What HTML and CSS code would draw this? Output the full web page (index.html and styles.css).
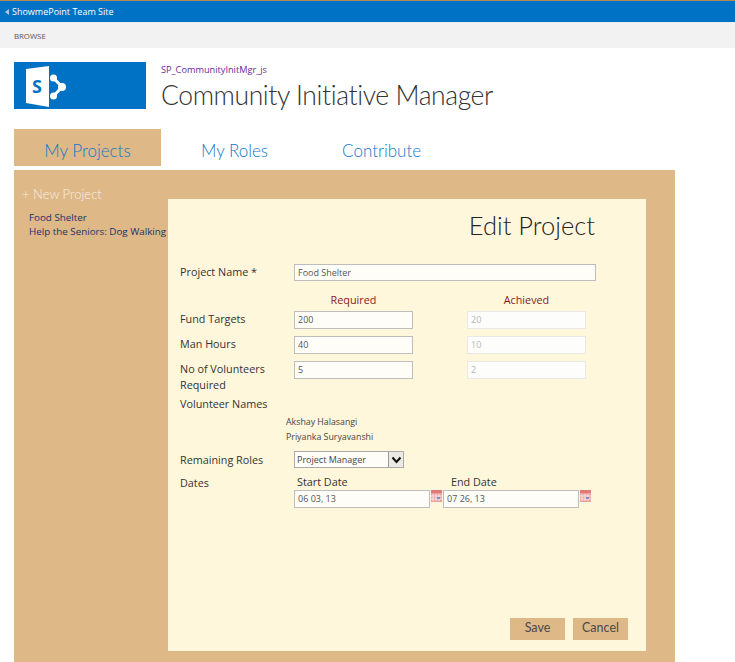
FILE: index.html
```html
<!DOCTYPE html>
<html lang="en">
<head>
<meta charset="utf-8">
<title>Community Initiative Manager</title>
<link rel="stylesheet" href="styles.css">
</head>
<body>
<header class="suitebar"><span class="back-arrow"></span><span>ShowmePoint Team Site</span></header>
<div class="ribbon">BROWSE</div>
<div class="site-head">
  <div class="logo">
    <svg width="48" height="42" viewBox="0 0 48 42">
      <path fill="#fff" d="M0 3 L23 0 V41 L0 37 Z"/>
      <text x="6" y="27" class="logo-s">S</text>
      <circle cx="27.500" cy="12" r="3.500" fill="#fff"/>
      <circle cx="27.500" cy="30" r="3.500" fill="#fff"/>
      <circle cx="36" cy="21" r="4" fill="#fff"/>
      <path fill="none" stroke="#fff" stroke-width="3" d="M27.500 12 L36 21 L27.500 30"/>
    </svg>
  </div>
  <div class="site-title">
    <a class="breadcrumb">SP_CommunityInitMgr_js</a>
    <h1>Community Initiative Manager</h1>
  </div>
</div>
<nav class="tabs">
  <a class="tab tab-active">My Projects</a>
  <a class="tab tab-roles">My Roles</a>
  <a class="tab tab-contribute">Contribute</a>
</nav>
<main class="panel">
  <aside class="sidebar">
    <div class="new-project">+ New Project</div>
    <ul class="projects">
      <li>Food Shelter</li>
      <li>Help the Seniors: Dog Walking</li>
    </ul>
  </aside>
  <section class="editor">
    <h2>Edit Project</h2>
    <div class="form">
      <label class="row-name">Project Name *</label>
      <div class="field wide">Food Shelter</div>

      <span class="heads"></span>
      <div class="head heads">Required</div>
      <div class="head heads">Achieved</div>

      <label>Fund Targets</label>
      <div class="field">200</div>
      <div class="field off">20</div>

      <label>Man Hours</label>
      <div class="field">40</div>
      <div class="field off">10</div>

      <label>No of Volunteers Required</label>
      <div class="field">5</div>
      <div class="field off">2</div>
    </div>
    <div class="volunteers">
      <div class="vol-label">Volunteer Names</div>
      <div class="vol-name">Akshay Halasangi</div>
      <div class="vol-name">Priyanka Suryavanshi</div>
    </div>
    <div class="roles">
      <label>Remaining Roles</label>
      <div class="select"><span class="select-text">Project Manager</span><span class="select-btn"><svg width="11" height="8" viewBox="0 0 11 8"><path d="M1.500 1.500 L5.500 6 L9.500 1.500" fill="none" stroke="#111" stroke-width="2"/></svg></span></div>
    </div>
    <div class="dates">
      <label>Dates</label>
      <div class="date">
        <div class="date-label">Start Date</div>
        <div class="date-line">
          <div class="field date-field">06 03, 13</div>
          <svg class="cal" width="11" height="12" viewBox="0 0 11 12"><rect width="11" height="12" fill="#ee9f9f"/><rect y="0" width="11" height="3" fill="#e07a76"/><path d="M2 4v7M5 4v7M8 4v7M0 6h11M0 9h11" stroke="#fbe3e3"/><rect x="6" y="7" width="3" height="2" fill="#6f93dc"/></svg>
        </div>
      </div>
      <div class="date">
        <div class="date-label">End Date</div>
        <div class="date-line">
          <div class="field date-field">07 26, 13</div>
          <svg class="cal" width="11" height="12" viewBox="0 0 11 12"><rect width="11" height="12" fill="#ee9f9f"/><rect y="0" width="11" height="3" fill="#e07a76"/><path d="M2 4v7M5 4v7M8 4v7M0 6h11M0 9h11" stroke="#fbe3e3"/><rect x="6" y="7" width="3" height="2" fill="#6f93dc"/></svg>
        </div>
      </div>
    </div>
    <div class="actions">
      <button class="btn">Save</button>
      <button class="btn">Cancel</button>
    </div>
  </section>
</main>
</body>
</html>
```
FILE: styles.css
```css
* { box-sizing: border-box; }
html, body { margin: 0; padding: 0; height: 662px; overflow: hidden; background: #fff; }
body { font-family: "Open Sans", "Noto Sans", sans-serif; color: #333; }

.suitebar { height: 23px; background: #0072c6; border-top: 1px solid #b08a4c; color: #fff; font-size: 9px; line-height: 21px; display: flex; align-items: center; padding-left: 5px; border-bottom: 1px solid #e6eef5; }
.back-arrow { width: 0; height: 0; border: 3.500px solid transparent; border-right: 4px solid #a9c6e2; border-left: 0; margin-right: 3px; }
.ribbon { height: 25px; background: #f2f2f2; color: #555; font-size: 7.800px; line-height: 27px; padding-left: 14px; }

.site-head { display: flex; padding: 14px 0 0 14px; height: 81px; }
.logo { width: 132px; height: 47px; background: #0072c6; padding: 4px 0 0 12px; }
.logo svg { display: block; }
.logo-s { font-family: "Open Sans", sans-serif; font-weight: 700; font-size: 18px; fill: #0072c6; }
.site-title { margin-left: 15px; }
.breadcrumb { display: block; color: #6a2a9c; font-size: 9.200px; line-height: 14px; margin-top: 1px; }
h1 { margin: 0; font-family: Lato, "Open Sans", sans-serif; font-weight: 300; font-size: 26.500px; letter-spacing: -0.400px; line-height: 36px; color: #333; white-space: nowrap; }

.tabs { display: flex; height: 37px; margin-left: 14px; font-family: Lato, "Open Sans", sans-serif; font-size: 17px; font-weight: 300; color: #0f78c8; }
.tab { line-height: 44px; }
.tab-active { width: 147px; background: #deb887; text-align: center; }
.tab-roles { margin-left: 40px; }
.tab-contribute { margin-left: 74px; }

.panel { display: flex; width: 661px; height: 492px; margin: 4px 0 0 14px; background: #deb887; position: relative; }
.sidebar { width: 154px; flex: none; padding-top: 15px; }
.new-project { color: #f8f0e0; font-family: Lato, "Open Sans", sans-serif; font-size: 13px; font-weight: 300; line-height: 18px; padding-left: 8px; }
.projects { list-style: none; margin: 8px 0 0; padding: 0 0 0 15px; color: #1a3366; font-size: 9.800px; line-height: 14px; white-space: nowrap; }

.editor { width: 478px; height: 452px; margin-top: 29px; background: #fff7dc; padding: 0 12px 0 12px; position: relative; display: flex; flex-direction: column; font-size: 10.800px; color: #333; }
h2 { margin: 9px 39px 0 0; text-align: right; font-family: Lato, "Open Sans", sans-serif; font-weight: 300; font-size: 25.500px; line-height: 34px; color: #222; }

.form { display: grid; grid-template-columns: 114px 173px 119px; margin-top: 22px; align-items: start; }
label { line-height: 16px; }
.field { height: 18px; width: 119px; background: #fffdf8; border: 1px solid #bdbdbd; color: #555; font-size: 9px; line-height: 16px; padding-left: 3px; margin-bottom: 7px; }
.field.wide { width: 302px; height: 17px; margin-bottom: 0; grid-column: 2 / 4; }
.heads { margin-top: 11px; }
.head { color: #8b1a1a; width: 119px; text-align: center; line-height: 16px; height: 19px; }
.form .head:first-of-type { padding-left: 2px; }
.off { background: #fdfdfb; border-color: #e8e8e4; color: #b5b5b5; }
.form label { padding-right: 12px; }

.volunteers { margin-top: 3px; }
.vol-label { line-height: 16px; }
.vol-name { font-size: 8.800px; line-height: 15px; color: #444; padding-left: 106px; }
.vol-label + .vol-name { margin-top: 3px; }

.roles { display: flex; margin-top: 6px; align-items: center; height: 17px; }
.roles label { width: 114px; }
.select { width: 110px; height: 17px; background: #fffdf8; border: 1px solid #aaa; display: flex; justify-content: space-between; font-size: 9px; line-height: 15px; color: #444; }
.select-text { padding-left: 2px; }
.select-btn { width: 15px; height: 15px; background: #eceae4; border-left: 1px solid #999; display: flex; align-items: center; justify-content: center; }

.dates { display: flex; margin-top: 7px; }
.dates label { width: 114px; }
.date { width: 149px; }
.date-label { padding-left: 3px; line-height: 14px; height: 15px; }
.date + .date .date-label { padding-left: 8px; }
.date-line { display: flex; align-items: flex-start; }
.date-field { width: 136px; margin: 0; }
.cal { margin-left: 1px; flex: none; }

.actions { position: absolute; right: 18px; bottom: 11px; display: flex; gap: 8px; }
.btn { width: 55px; height: 22px; background: #deb887; border: 0; padding: 0 0 3px; color: #4a4a4a; font-family: Lato, "Open Sans", sans-serif; font-size: 12.500px; font-weight: 400; line-height: 16px; }
```
